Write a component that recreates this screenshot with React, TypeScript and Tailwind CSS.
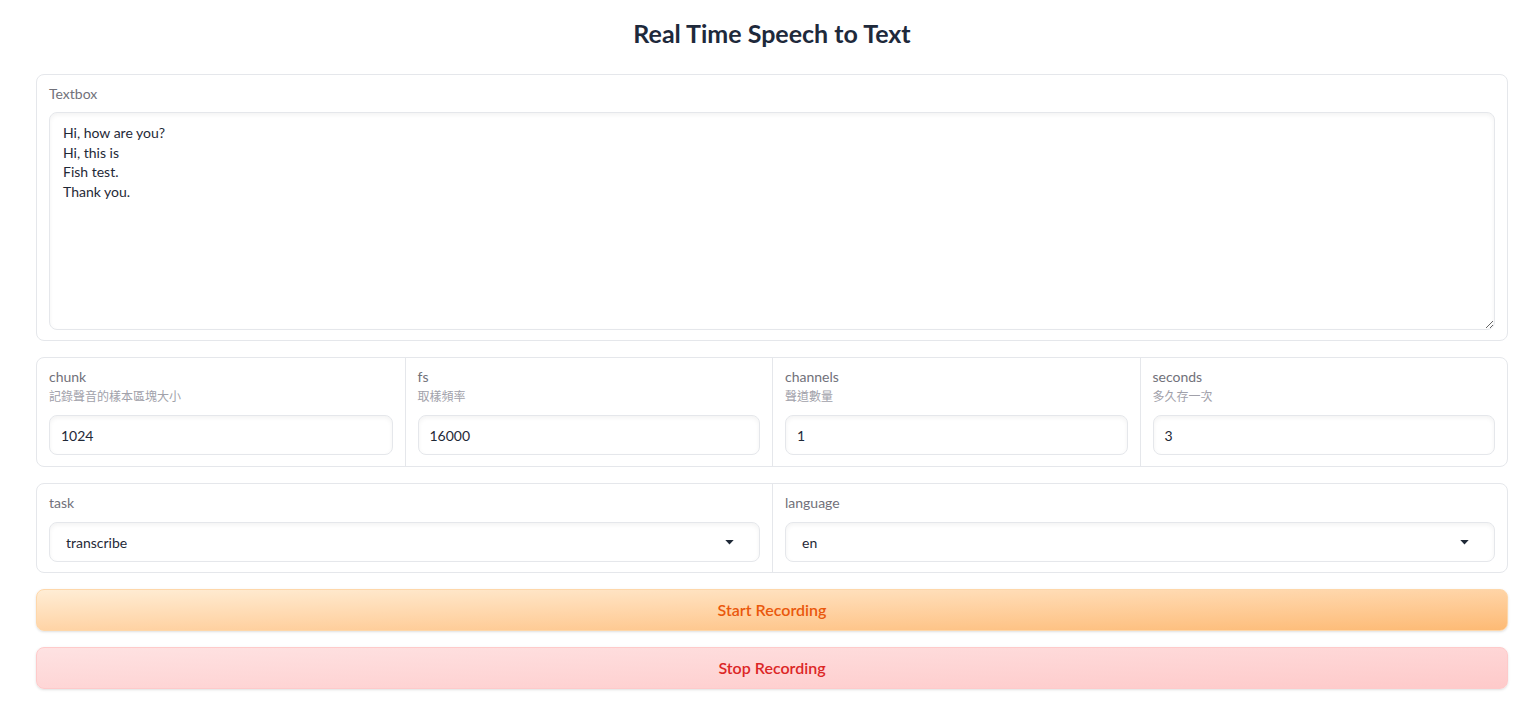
export default function App() {
  const params = [
    { label: 'chunk', info: '記錄聲音的樣本區塊大小', value: '1024' },
    { label: 'fs', info: '取樣頻率', value: '16000' },
    { label: 'channels', info: '聲道數量', value: '1' },
    { label: 'seconds', info: '多久存一次', value: '3' },
  ]

  const selects = [
    { label: 'task', value: 'transcribe' },
    { label: 'language', value: 'en' },
  ]

  return (
    <div
      className="min-h-screen bg-white pt-[17px] pr-[30px] pb-8 pl-9 text-[#1f2937]"
      style={{ fontFamily: 'Lato, "Noto Sans CJK TC", sans-serif' }}
    >
      <h1 className="h-8 text-center text-[25px] leading-8 font-bold text-[#1e293b]">
        Real Time Speech to Text
      </h1>

      <div className="mt-[25px] flex flex-col gap-4">
        {/* textbox */}
        <div className="rounded-lg border border-[#e5e7eb] bg-white px-3 pt-[9px] pb-[10px]">
          <div className="text-[14px] leading-5 text-[#71717a]">Textbox</div>
          <textarea
            readOnly
            defaultValue={'Hi, how are you?\nHi, this is\nFish test.\nThank you.'}
            className="mt-2 block h-[218px] w-full rounded-lg border border-[#e5e7eb] px-[13px] py-[10px] text-[14px] leading-[19.5px] text-[#1f2937] shadow-[inset_0_2px_4px_rgba(0,0,0,0.05)] outline-none"
          />
        </div>

        {/* parameters */}
        <div className="grid grid-cols-4 rounded-lg border border-[#e5e7eb] bg-white">
          {params.map((p, i) => (
            <div key={p.label} className={`px-3 pt-[9px] pb-[11px] ${i > 0 ? 'border-l border-[#e5e7eb]' : ''}`}>
              <div className="text-[14px] leading-5 text-[#71717a]">{p.label}</div>
              <div className="text-[12px] leading-5 text-[#a1a1aa]">{p.info}</div>
              <div className="mt-2 flex h-[40px] items-center rounded-lg border border-[#e5e7eb] px-[11px] text-[14px] text-[#1f2937] shadow-[inset_0_2px_4px_rgba(0,0,0,0.05)]">
                {p.value}
              </div>
            </div>
          ))}
        </div>

        {/* dropdowns */}
        <div className="grid grid-cols-2 rounded-lg border border-[#e5e7eb] bg-white">
          {selects.map((s, i) => (
            <div key={s.label} className={`px-3 pt-[9px] pb-[10px] ${i > 0 ? 'border-l border-[#e5e7eb]' : ''}`}>
              <div className="text-[14px] leading-5 text-[#71717a]">{s.label}</div>
              <div className="mt-[9px] flex h-[40px] items-center justify-between rounded-lg border border-[#e5e7eb] pr-[25px] pl-4 text-[14px] text-[#1f2937] shadow-[inset_0_2px_4px_rgba(0,0,0,0.05)]">
                <span>{s.value}</span>
                <svg width="9" height="5" viewBox="0 0 10 6">
                  <path d="M0 0h10L5 5.5z" fill="#1f2937" />
                </svg>
              </div>
            </div>
          ))}
        </div>

        <button className="h-[42px] w-full rounded-lg border border-[#fed7aa] bg-gradient-to-br from-[#ffedd5] to-[#fdba74] text-[16px] font-semibold text-[#ea580c] shadow-sm">
          Start Recording
        </button>
        <button className="h-[42px] w-full rounded-lg border border-[#fecaca] bg-gradient-to-br from-[#fee2e2] to-[#fecaca] text-[16px] font-semibold text-[#dc2626] shadow-sm">
          Stop Recording
        </button>
      </div>
    </div>
  )
}
